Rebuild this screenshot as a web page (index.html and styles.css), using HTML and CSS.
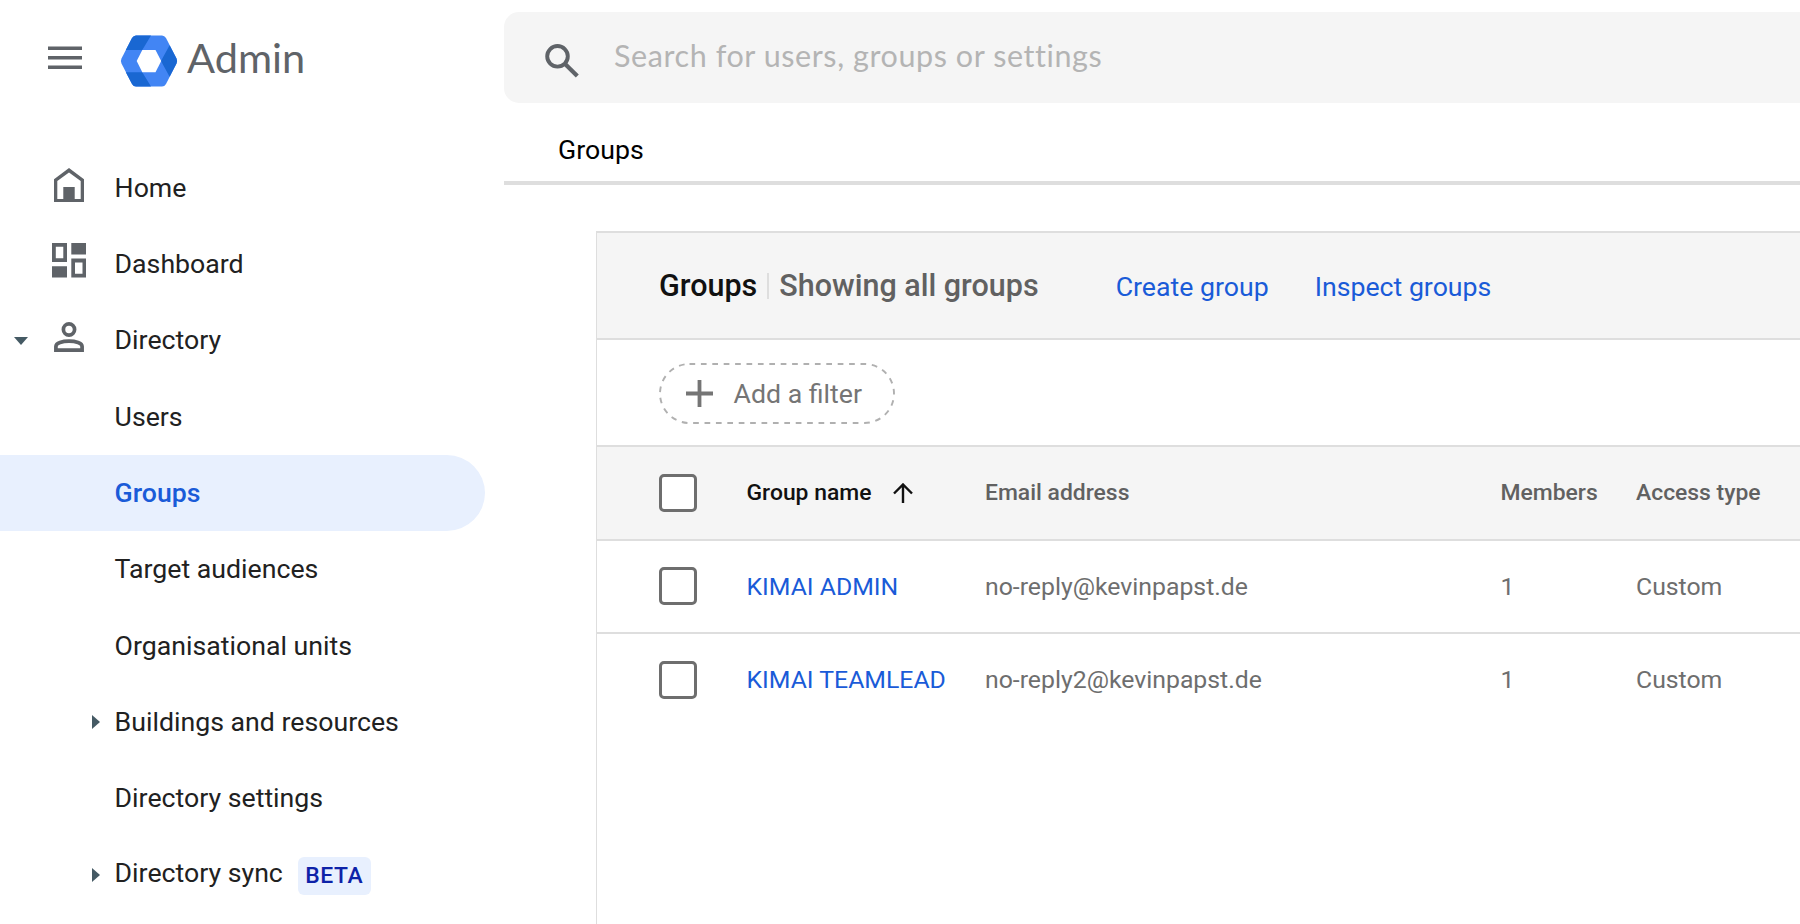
FILE: index.html
```html
<!DOCTYPE html>
<html lang="en">
<head>
<meta charset="utf-8">
<title>Admin</title>
<link rel="stylesheet" href="styles.css">
</head>
<body>
<div class="app">
  <aside class="sidebar">
    <header class="brand">
      <svg class="menu-icon" width="34" height="24" viewBox="0 0 34 24"><path d="M0 .5h34v3.6H0zM0 10h34v3.6H0zM0 19.4h34V23H0z"/></svg>
      <svg class="logo" width="58" height="52" viewBox="0 0 58 52">
        <path class="logo-light" d="M16 .5h26q2.500 0 4 2.500L56.500 23.500q1.200 2.500 0 5L46 49q-1.500 2.500-4 2.500H16q-2.500 0-4-2.500L1.500 28.500q-1.200-2.500 0-5L12 3Q13.500.500 16 .5z"/>
        <path class="logo-dark" d="M16 .5h15L22.300 15H5.800L12 3Q13.500.500 16 .5zM5.800 37.300h16.500L31 51.500H16q-2.500 0-4-2.500zM41 26l8.600-15.800L56.500 23.500q1.200 2.500 0 5L49.600 41.800z"/>
        <path class="logo-hole" d="M22.300 15H35.500l5.700 11.100-5.700 11.200H22.300L16.700 26.100z"/>
      </svg>
      <span class="brand-name">Admin</span>
    </header>
    <nav class="nav">
      <a class="nav-item"><span class="lead"><svg class="icon" width="30" height="34" viewBox="0 0 30 34"><path fill-rule="evenodd" d="M15 0 30 11.300V34H0V11.300zM15 4.500 3.300 13V31h6V19h11.400v12h6V13z"/></svg></span>Home</a>
      <a class="nav-item"><span class="lead"><svg class="icon" width="34" height="35" viewBox="0 0 34 35"><path fill-rule="evenodd" d="M0 0h15v19H0zM3.800 3.800v11.400h7.500V3.800zM19.300 0H34v11.400H19.300zM0 23.200h15v11.400H0zM19.300 15.600H34v19H19.300zM23 19.400v11.400h7.500V19.400z"/></svg></span>Dashboard</a>
      <a class="nav-item"><span class="lead"><i class="caret-down"></i><svg class="icon" width="30" height="30" viewBox="0 0 30 30"><path d="M15 1.900a5.600 5.600 0 1 1 0 11.200 5.600 5.600 0 0 1 0-11.200zM1.900 28.100v-3.700c0-7 26.200-7 26.200 0v3.700z" fill="none" stroke="#5f6368" stroke-width="3.700"/></svg></span>Directory</a>
      <a class="nav-item"><span class="lead"></span>Users</a>
      <a class="nav-item active"><span class="lead"></span>Groups</a>
      <a class="nav-item"><span class="lead"></span>Target audiences</a>
      <a class="nav-item"><span class="lead"></span>Organisational units</a>
      <a class="nav-item"><span class="lead"><i class="caret-right"></i></span>Buildings and resources</a>
      <a class="nav-item"><span class="lead"></span>Directory settings</a>
      <a class="nav-item sync"><span class="lead"><i class="caret-right"></i></span><span class="sync-label">Directory sync</span><span class="beta">BETA</span></a>
    </nav>
  </aside>
  <main class="main">
    <div class="search">
      <svg class="search-icon" width="34" height="34" viewBox="0 0 34 34"><g fill="none" stroke="#5f6368" stroke-width="3.900"><circle cx="12.500" cy="12.300" r="10.300"/><path d="M19.600 19.400 32.300 32.100" stroke-width="4.200"/></g></svg>
      <span class="placeholder">Search for users, groups or settings</span>
    </div>
    <div class="crumb">Groups</div>
    <section class="card">
      <div class="card-head">
        <h1 class="title">Groups</h1><span class="bar"></span><h2 class="subtitle">Showing all groups</h2>
        <a class="link create">Create group</a><a class="link inspect">Inspect groups</a>
      </div>
      <div class="filters">
        <button class="chip">
          <svg class="chip-outline" width="236" height="61" viewBox="0 0 236 61"><rect x="1" y="1" width="234" height="59" rx="29.500"/></svg>
          <svg class="plus" width="27" height="27" viewBox="0 0 27 27"><path d="M11.600 0h3.800v11.600H27v3.800H15.400V27h-3.800V15.400H0v-3.800h11.600z"/></svg>
          <span class="chip-label">Add a filter</span>
        </button>
      </div>
      <div class="row head">
        <span class="check"></span>
        <span class="name">Group name<svg class="sort" width="20" height="20" viewBox="0 0 20 20"><path d="M10 20V1.600M1 10.500l9-9 9 9" fill="none" stroke="#111" stroke-width="2.400"/></svg></span>
        <span class="email">Email address</span><span class="members">Members</span><span class="access">Access type</span>
      </div>
      <div class="row">
        <span class="check"></span><a class="name">KIMAI ADMIN</a><span class="email">no-reply@kevinpapst.de</span><span class="members">1</span><span class="access">Custom</span>
      </div>
      <div class="row last">
        <span class="check"></span><a class="name">KIMAI TEAMLEAD</a><span class="email">no-reply2@kevinpapst.de</span><span class="members">1</span><span class="access">Custom</span>
      </div>
    </section>
  </main>
</div>
</body>
</html>
```
FILE: styles.css
```css
* { box-sizing: border-box; }
body { margin: 0; background: #fff; font-family: Roboto, sans-serif; color: #212121; overflow: hidden; }
.app { display: flex; height: 924px; }
.sidebar { width: 504px; flex: none; }
.brand { height: 149.400px; display: flex; align-items: flex-start; padding-left: 48px; }
.menu-icon { margin-top: 45.500px; fill: #5f6368; }
.logo { margin: 35px 0 0 38px; }
.logo-light { fill: #4285f4; }
.logo-dark { fill: #1967d2; }
.logo-hole { fill: #fff; }
.brand-name { margin: 32px 0 0 9px; font: 41.500px/50px Lato, sans-serif; color: #5f6368; }
.nav { display: flex; flex-direction: column; }
.nav-item { height: 76.350px; width: 485px; display: flex; align-items: center; font-size: 26.700px; white-space: nowrap; }
.active { background: #e8f0fe; color: #1a5bd8; font-weight: 500; border-radius: 0 38px 38px 0; }
.lead { width: 114.600px; height: 100%; flex: none; display: flex; align-items: center; justify-content: flex-end; }
.icon { fill: #5f6368; width: 34px; margin: 0 29px 6px 0; flex: none; }
.caret-down { border: 7.500px solid transparent; border-top: 8px solid #455a64; border-bottom: 0; margin: 1px 23.500px 0 0; }
.caret-right { border: 7.500px solid transparent; border-left: 8px solid #455a64; border-right: 0; margin-right: 14.500px; }
.sync-label { margin-top: -4px; }
.beta { margin: 2px 0 0 15px; width: 73px; height: 38px; border-radius: 6px; background: #e8f0fe; color: #0d22a8; font-size: 22.900px; font-weight: 500; letter-spacing: .6px; line-height: 38px; text-align: center; }
.main { flex: 1; min-width: 0; padding-top: 12px; }
.search { height: 91px; background: #f5f5f5; border-radius: 15px 0 0 15px; display: flex; align-items: center; padding-left: 41px; }
.search-icon { margin-top: 6px; }
.placeholder { margin: -5px 0 0 35px; font: 30.500px/40px Lato, sans-serif; letter-spacing: .58px; color: #b4b4b4; white-space: nowrap; }
.crumb { height: 82px; border-bottom: 4px solid #dedede; padding: 31px 0 0 54px; font-size: 26.700px; line-height: 32px; color: #000; }
.card { margin: 46px 0 0 92px; height: 693px; border: solid #dedede; border-width: 2px 0 0 1.500px; }
.card-head { height: 107px; background: #f5f5f5; border-bottom: 2px solid #dedede; display: flex; align-items: center; padding-left: 62px; white-space: nowrap; }
.title, .subtitle { margin: 0; font-size: 30.500px; font-weight: 500; line-height: 40px; color: #111; }
.subtitle { color: #616161; }
.bar { width: 2px; height: 26px; margin: 0 10px 0 10px; background: #dedede; }
.link { font-size: 26.700px; color: #1a5bd8; margin-top: 2px; }
.create { margin-left: 77px; }
.inspect { margin-left: 46px; }
.filters { height: 107px; border-bottom: 2px solid #dedede; padding: 23px 0 0 61.500px; }
.chip { position: relative; width: 236px; height: 61px; border: 0; background: none; padding: 0 0 0 27px; display: flex; align-items: center; font: 26.700px/32px Roboto, sans-serif; color: #757575; }
.chip-outline { position: absolute; inset: 0; fill: none; stroke: #b0b0b0; stroke-width: 1.900; stroke-dasharray: 5.700 5.700; }
.plus { fill: #757575; }
.chip-label { margin-left: 21px; }
.row { height: 93.700px; border-bottom: 2px solid #dedede; display: grid; grid-template-columns: 87.500px 238.500px 515.500px 135.500px 1fr; align-items: center; padding-left: 62px; font-size: 24.800px; color: #6e6e6e; white-space: nowrap; }
.row:not(.head) { padding-bottom: 1px; }
.last { border-bottom-color: transparent; }
.head { background: #f5f5f5; font-size: 22.900px; font-weight: 500; color: #616161; }
.check { width: 38px; height: 38px; border: 3.800px solid #6e6e6e; border-radius: 5px; background: #fff; }
.name { color: #1a5bd8; }
.head .name { color: #111; display: flex; align-items: center; }
.sort { margin-left: 22px; }
```
